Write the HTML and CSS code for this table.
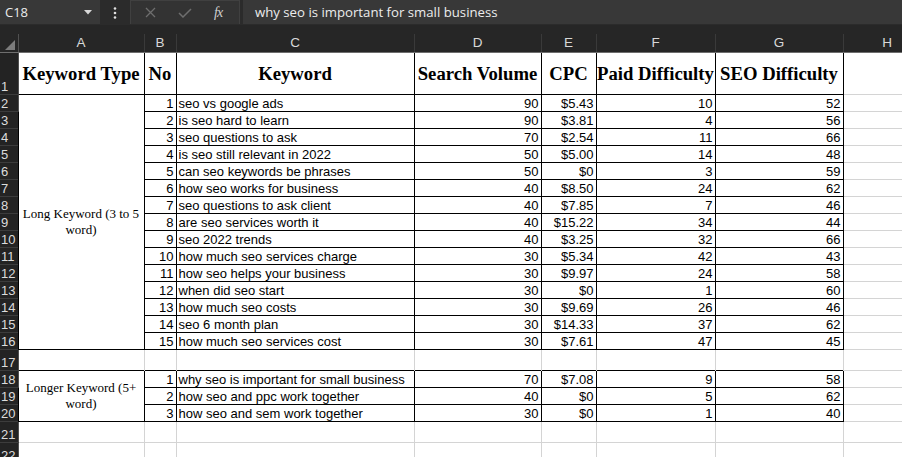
FILE: index.html
```html
<!DOCTYPE html>
<html>
<head>
<meta charset="utf-8">
<link rel="stylesheet" href="styles.css">
</head>
<body>
<div class="app">
  <div class="fbar">
    <div class="namebox">
      <span class="nb-text">C18</span>
      <svg class="nb-caret" width="8" height="5" viewBox="0 0 8 5"><path d="M0 0H8L4 4.5Z" fill="#d8d8d8"/></svg>
    </div>
    <div class="dots">
      <svg width="4" height="12" viewBox="0 0 4 12"><circle cx="2" cy="1.5" r="1.3" fill="#e0e0e0"/><circle cx="2" cy="6" r="1.3" fill="#e0e0e0"/><circle cx="2" cy="10.5" r="1.3" fill="#e0e0e0"/></svg>
    </div>
    <div class="btnbox">
      <svg class="ico-x" width="11" height="11" viewBox="0 0 11 11"><path d="M1 1L10 10M10 1L1 10" stroke="#6e6e6e" stroke-width="1.3"/></svg>
      <svg class="ico-ok" width="14" height="10" viewBox="0 0 14 10"><path d="M1 5L5 9L13 1" stroke="#6e6e6e" stroke-width="1.5" fill="none"/></svg>
      <span class="fx">fx</span>
    </div>
    <div class="finput">why seo is important for small business</div>
  </div>
  <div class="gapbar"></div>
  <table class="sheet">
    <colgroup>
      <col class="c-rh"><col class="c-a"><col class="c-b"><col class="c-c"><col class="c-d"><col class="c-e"><col class="c-f"><col class="c-g"><col class="c-h">
    </colgroup>
    <tr class="hdr">
      <th class="corner"><svg width="11" height="10" viewBox="0 0 11 10"><path d="M10 0V10H0Z" fill="#7c7c7c"/></svg></th>
      <th class="ch">A</th><th class="ch">B</th><th class="ch">C</th><th class="ch">D</th><th class="ch">E</th><th class="ch">F</th><th class="ch">G</th><th class="ch">H</th>
    </tr>
    <tr class="r1">
      <th class="rn">1</th>
      <td class="k hd">Keyword Type</td><td class="k hd">No</td><td class="k hd">Keyword</td><td class="k hd">Search Volume</td><td class="k hd">CPC</td><td class="k hd">Paid Difficulty</td><td class="k hd">SEO Difficulty</td><td class="g"></td>
    </tr>
    <tr><th class="rn">2</th><td class="k grp" rowspan="15">Long Keyword (3 to 5 word)</td><td class="k r">1</td><td class="k t">seo vs google ads</td><td class="k r">90</td><td class="k r">$5.43</td><td class="k r">10</td><td class="k r">52</td><td class="g"></td></tr>
    <tr><th class="rn">3</th><td class="k r">2</td><td class="k t">is seo hard to learn</td><td class="k r">90</td><td class="k r">$3.81</td><td class="k r">4</td><td class="k r">56</td><td class="g"></td></tr>
    <tr><th class="rn">4</th><td class="k r">3</td><td class="k t">seo questions to ask</td><td class="k r">70</td><td class="k r">$2.54</td><td class="k r">11</td><td class="k r">66</td><td class="g"></td></tr>
    <tr><th class="rn">5</th><td class="k r">4</td><td class="k t">is seo still relevant in 2022</td><td class="k r">50</td><td class="k r">$5.00</td><td class="k r">14</td><td class="k r">48</td><td class="g"></td></tr>
    <tr><th class="rn">6</th><td class="k r">5</td><td class="k t">can seo keywords be phrases</td><td class="k r">50</td><td class="k r">$0</td><td class="k r">3</td><td class="k r">59</td><td class="g"></td></tr>
    <tr><th class="rn">7</th><td class="k r">6</td><td class="k t">how seo works for business</td><td class="k r">40</td><td class="k r">$8.50</td><td class="k r">24</td><td class="k r">62</td><td class="g"></td></tr>
    <tr><th class="rn">8</th><td class="k r">7</td><td class="k t">seo questions to ask client</td><td class="k r">40</td><td class="k r">$7.85</td><td class="k r">7</td><td class="k r">46</td><td class="g"></td></tr>
    <tr><th class="rn">9</th><td class="k r">8</td><td class="k t">are seo services worth it</td><td class="k r">40</td><td class="k r">$15.22</td><td class="k r">34</td><td class="k r">44</td><td class="g"></td></tr>
    <tr><th class="rn">10</th><td class="k r">9</td><td class="k t">seo 2022 trends</td><td class="k r">40</td><td class="k r">$3.25</td><td class="k r">32</td><td class="k r">66</td><td class="g"></td></tr>
    <tr><th class="rn">11</th><td class="k r">10</td><td class="k t">how much seo services charge</td><td class="k r">30</td><td class="k r">$5.34</td><td class="k r">42</td><td class="k r">43</td><td class="g"></td></tr>
    <tr><th class="rn">12</th><td class="k r">11</td><td class="k t">how seo helps your business</td><td class="k r">30</td><td class="k r">$9.97</td><td class="k r">24</td><td class="k r">58</td><td class="g"></td></tr>
    <tr><th class="rn">13</th><td class="k r">12</td><td class="k t">when did seo start</td><td class="k r">30</td><td class="k r">$0</td><td class="k r">1</td><td class="k r">60</td><td class="g"></td></tr>
    <tr><th class="rn">14</th><td class="k r">13</td><td class="k t">how much seo costs</td><td class="k r">30</td><td class="k r">$9.69</td><td class="k r">26</td><td class="k r">46</td><td class="g"></td></tr>
    <tr><th class="rn">15</th><td class="k r">14</td><td class="k t">seo 6 month plan</td><td class="k r">30</td><td class="k r">$14.33</td><td class="k r">37</td><td class="k r">62</td><td class="g"></td></tr>
    <tr><th class="rn">16</th><td class="k r">15</td><td class="k t">how much seo services cost</td><td class="k r">30</td><td class="k r">$7.61</td><td class="k r">47</td><td class="k r">45</td><td class="g"></td></tr>
    <tr class="tall"><th class="rn">17</th><td class="g nb"></td><td class="g nb"></td><td class="g nb"></td><td class="g nb"></td><td class="g nb"></td><td class="g nb"></td><td class="g nb"></td><td class="g"></td></tr>
    <tr><th class="rn">18</th><td class="k grp" rowspan="3">Longer Keyword (5+ word)</td><td class="k r">1</td><td class="k t">why seo is important for small business</td><td class="k r">70</td><td class="k r">$7.08</td><td class="k r">9</td><td class="k r">58</td><td class="g"></td></tr>
    <tr><th class="rn">19</th><td class="k r">2</td><td class="k t">how seo and ppc work together</td><td class="k r">40</td><td class="k r">$0</td><td class="k r">5</td><td class="k r">62</td><td class="g"></td></tr>
    <tr><th class="rn">20</th><td class="k r">3</td><td class="k t">how seo and sem work together</td><td class="k r">30</td><td class="k r">$0</td><td class="k r">1</td><td class="k r">40</td><td class="g"></td></tr>
    <tr class="tall"><th class="rn">21</th><td class="g"></td><td class="g"></td><td class="g"></td><td class="g"></td><td class="g"></td><td class="g"></td><td class="g"></td><td class="g"></td></tr>
    <tr class="tall"><th class="rn">22</th><td class="g"></td><td class="g"></td><td class="g"></td><td class="g"></td><td class="g"></td><td class="g"></td><td class="g"></td><td class="g"></td></tr>
  </table>
</div>
</body>
</html>
```
FILE: styles.css
```css
html, body {
  margin: 0;
  padding: 0;
  background: #ffffff;
  overflow: hidden;
}
.app {
  width: 902px;
  height: 457px;
  overflow: hidden;
  background: #ffffff;
}
.fbar {
  height: 25px;
  background: #2b2b2b;
  display: flex;
  align-items: stretch;
}
.namebox {
  width: 100px;
  height: 24px;
  background: #383838;
  display: flex;
  align-items: center;
  justify-content: space-between;
  padding: 0 8px 0 5px;
  box-sizing: border-box;
}
.nb-text {
  font-family: "Open Sans", "Noto Sans", sans-serif;
  font-size: 13px;
  color: #ececec;
}
.dots {
  width: 30px;
  display: flex;
  align-items: center;
  justify-content: center;
}
.btnbox {
  width: 110px;
  height: 24px;
  box-sizing: border-box;
  background: #333333;
  border: 1px solid #404040;
  border-bottom: none;
  display: flex;
  align-items: center;
  padding-left: 14px;
}
.ico-x { margin-right: 22px; }
.ico-ok { margin-right: 22px; }
.fx {
  font-family: "Liberation Serif", serif;
  font-style: italic;
  font-size: 14px;
  color: #d0d0d0;
  letter-spacing: -1px;
}
.finput {
  flex: 1;
  margin-left: 3px;
  height: 24px;
  background: #383838;
  font-family: "Open Sans", "Noto Sans", sans-serif;
  font-size: 13.2px;
  color: #ececec;
  line-height: 24px;
  padding-left: 12px;
  white-space: nowrap;
}
.gapbar {
  height: 9px;
  background: #262626;
}
.sheet {
  border-collapse: collapse;
  table-layout: fixed;
  width: 931px;
}
.c-rh { width: 18px; }
.c-a { width: 126px; }
.c-b { width: 32px; }
.c-c { width: 238px; }
.c-d { width: 127px; }
.c-e { width: 55px; }
.c-f { width: 119px; }
.c-g { width: 128px; }
.c-h { width: 88px; }

.sheet th, .sheet td {
  padding: 0;
  overflow: hidden;
  white-space: nowrap;
}
.hdr th {
  height: 16px;
  background: #262626;
  border-bottom: 1px solid #6e6e6e;
  border-right: 1px solid #3a3a3a;
  font-family: "Liberation Sans", Arial, sans-serif;
  font-weight: normal;
  font-size: 13.5px;
  line-height: 16px;
  color: #d8d8d8;
  text-align: center;
  vertical-align: middle;
}
.hdr th.corner {
  text-align: right;
  vertical-align: bottom;
  padding: 0 2px 2px 0;
  border-right: 1px solid #505050;
}
.hdr th.corner svg { display: block; margin-left: auto; }
.sheet th.rn {
  background: #232323;
  color: #dcdcdc;
  font-family: "Liberation Sans", Arial, sans-serif;
  font-weight: normal;
  font-size: 13px;
  line-height: 15px;
  text-align: left;
  vertical-align: bottom;
  padding-left: 1px;
  border-bottom: 1px solid #3c3c3c;
  border-right: 1px solid #505050;
}
.sheet td {
  height: 16px;
  font-family: "Liberation Sans", Arial, sans-serif;
  font-size: 13px;
  line-height: 15px;
  color: #000;
  vertical-align: bottom;
  border: 1px solid #d4d4d4;
}
.sheet td.k { border: 1px solid #000; }
.sheet td.g { border: 1px solid #d4d4d4; }
.sheet td.nb { border-bottom-style: none; }
.r1 td { height: 41px; }
.tall td, .tall th { height: 20px; }
.sheet td.hd {
  font-family: "Liberation Serif", "Times New Roman", serif;
  font-weight: bold;
  font-size: 18.7px;
  line-height: 22px;
  text-align: center;
  vertical-align: middle;
}
.sheet td.grp {
  font-family: "Liberation Serif", "Times New Roman", serif;
  font-size: 13px;
  line-height: 16px;
  white-space: normal;
  text-align: center;
  vertical-align: middle;
  padding: 0 2px;
}
.sheet td.r { text-align: right; padding-right: 2px; }
.sheet td.t { text-align: left; padding-left: 2px; }
```
